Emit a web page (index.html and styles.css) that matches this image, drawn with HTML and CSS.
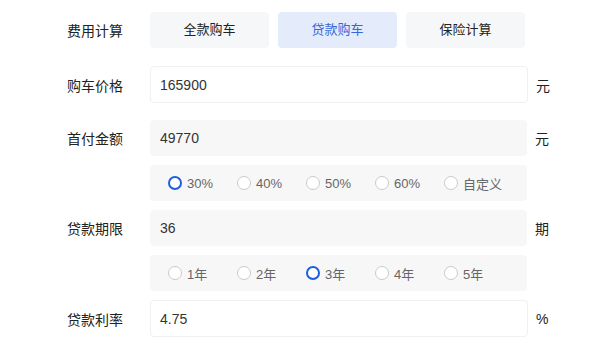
FILE: index.html
```html
<!DOCTYPE html>
<html lang="zh-CN">
<head>
    <meta charset="UTF-8">
    <title>购车计算器</title>
    <link rel="stylesheet" href="styles.css">
</head>
<body>
    <div class="calc">
        <div class="calc-row">
            <span class="calc-label">费用计算</span>
            <div class="tabs">
                <span class="tab">全款购车</span>
                <span class="tab tab-active">贷款购车</span>
                <span class="tab">保险计算</span>
            </div>
        </div>
        <div class="calc-row calc-row-input">
            <span class="calc-label">购车价格</span>
            <div class="field field-white">165900</div>
            <span class="unit">元</span>
        </div>
        <div class="calc-row calc-row-tight">
            <span class="calc-label">首付金额</span>
            <div class="field">49770</div>
            <span class="unit">元</span>
        </div>
        <div class="calc-row calc-row-tight">
            <span class="calc-label"></span>
            <div class="field radios">
                <span class="radio radio-on"><i></i>30%</span>
                <span class="radio"><i></i>40%</span>
                <span class="radio"><i></i>50%</span>
                <span class="radio"><i></i>60%</span>
                <span class="radio"><i></i>自定义</span>
            </div>
        </div>
        <div class="calc-row calc-row-tight">
            <span class="calc-label">贷款期限</span>
            <div class="field">36</div>
            <span class="unit">期</span>
        </div>
        <div class="calc-row calc-row-tight">
            <span class="calc-label"></span>
            <div class="field radios">
                <span class="radio"><i></i>1年</span>
                <span class="radio"><i></i>2年</span>
                <span class="radio radio-on"><i></i>3年</span>
                <span class="radio"><i></i>4年</span>
                <span class="radio"><i></i>5年</span>
            </div>
        </div>
        <div class="calc-row">
            <span class="calc-label">贷款利率</span>
            <div class="field field-white">4.75</div>
            <span class="unit">%</span>
        </div>
    </div>
</body>
</html>
```

FILE: styles.css
```css
body {
    margin: 0;
    background: #fff;
    font-family: "Liberation Sans", "Noto Sans CJK SC", sans-serif;
    color: #333;
}
.calc {
    padding-top: 12px;
}
.calc-row {
    display: flex;
    align-items: center;
    margin-bottom: 18px;
}
.calc-row-input {
    margin-bottom: 17px;
}
.calc-row-tight {
    margin-bottom: 9px;
}
.calc-label {
    width: 123px;
    margin-right: 27px;
    text-align: right;
    font-size: 14px;
    color: #222;
}
.tabs {
    display: flex;
    gap: 9px;
}
.tab {
    width: 119px;
    height: 36px;
    line-height: 36px;
    text-align: center;
    font-size: 13px;
    color: #222;
    background: #f6f7f8;
    border-radius: 4px;
}
.tab-active {
    background: #e4ecfc;
    color: #3a67d8;
}
.field {
    box-sizing: border-box;
    width: 377px;
    height: 36px;
    padding-left: 10px;
    display: flex;
    align-items: center;
    font-size: 14px;
    color: #333;
    background: #f7f7f8;
    border-radius: 4px;
}
.field-white {
    height: 37px;
    width: 378px;
    background: #fff;
    border: 1px solid #f0f0f2;
    padding-left: 9px;
}
.unit {
    margin-left: 8px;
    font-size: 14px;
    color: #222;
}
.radios {
    padding-left: 18px;
}
.radio {
    width: 69px;
    display: flex;
    align-items: center;
    gap: 5px;
    font-size: 13px;
    color: #666;
}
.radio i {
    box-sizing: border-box;
    width: 14px;
    height: 14px;
    border-radius: 50%;
    border: 1px solid #c9cacd;
    background: #fff;
}
.radio-on i {
    border: 2.5px solid #1d5ee0;
}
```
